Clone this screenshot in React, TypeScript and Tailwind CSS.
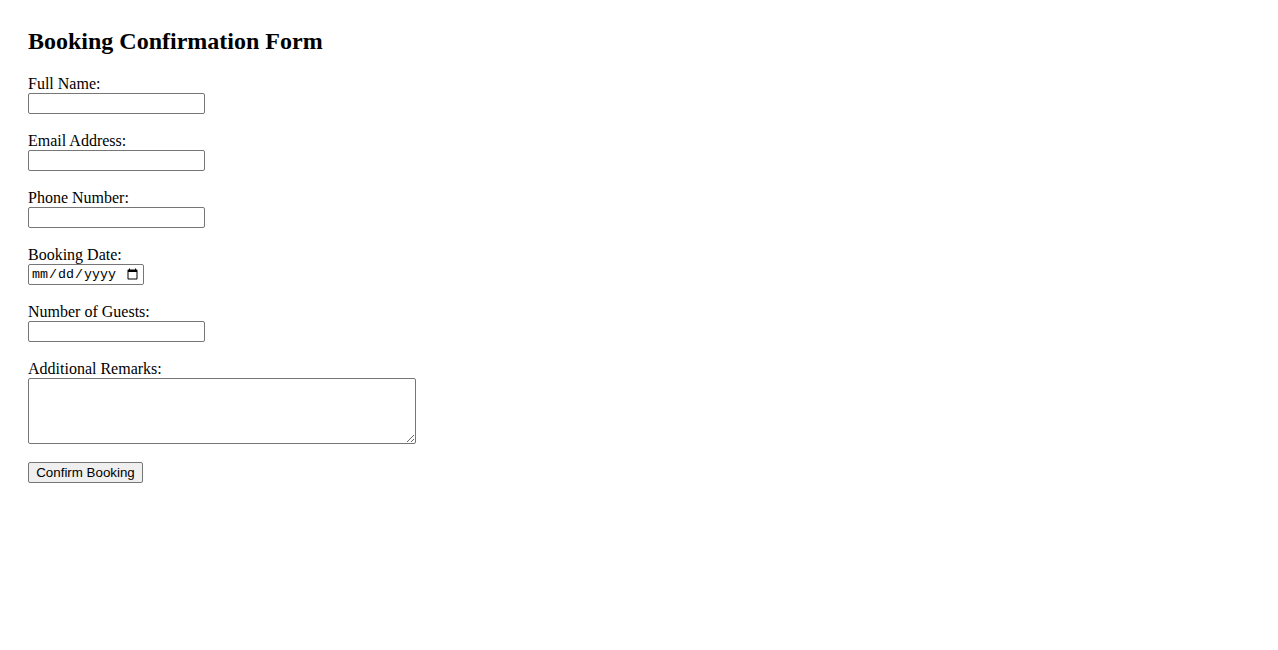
import React from "react";

const inputCls =
  "block w-[177px] h-[21px] border border-[#767676] rounded-[2px] bg-white px-[2px] py-[1px] text-[13.33px] [font-family:'Liberation_Sans',Arial,sans-serif] outline-none";

function Field({ label, children }: { label: string; children: React.ReactNode }) {
  return (
    <div className="flex flex-col">
      <label className="text-[16px] leading-[18px] h-[18px]">{label}</label>
      {children}
    </div>
  );
}

export default function App() {
  return (
    <div className="min-h-[650px] bg-white text-black pl-[28px] pt-[27px] [font-family:'Liberation_Serif','Times_New_Roman',serif]">
      <h2 className="text-[24px] leading-[28px] font-bold mb-[20px]">Booking Confirmation Form</h2>
      <form className="flex flex-col gap-[18px]" onSubmit={(e) => e.preventDefault()}>
        <Field label="Full Name:">
          <input type="text" className={inputCls} />
        </Field>
        <Field label="Email Address:">
          <input type="email" className={inputCls} />
        </Field>
        <Field label="Phone Number:">
          <input type="tel" className={inputCls} />
        </Field>
        <Field label="Booking Date:">
          <input
            type="date"
            className="block w-[116px] h-[21px] border border-[#767676] rounded-[2px] bg-white px-[2px] py-[1px] text-[13.33px] [font-family:'Liberation_Mono','Courier_New',monospace] outline-none"
          />
        </Field>
        <Field label="Number of Guests:">
          <input type="number" className={inputCls} />
        </Field>
        <Field label="Additional Remarks:">
          <textarea className="block w-[388px] h-[66px] border border-[#767676] rounded-[2px] bg-white p-[2px] text-[13.33px] [font-family:'Liberation_Mono',monospace] outline-none" />
        </Field>
        <div className="flex">
          <button
            type="submit"
            className="block h-[21px] w-[115px] border border-[#767676] rounded-[2px] bg-[#efefef] px-[6px] text-[13.33px] leading-[17px] text-black [font-family:'Liberation_Sans',Arial,sans-serif]"
          >
            Confirm Booking
          </button>
        </div>
      </form>
    </div>
  );
}
